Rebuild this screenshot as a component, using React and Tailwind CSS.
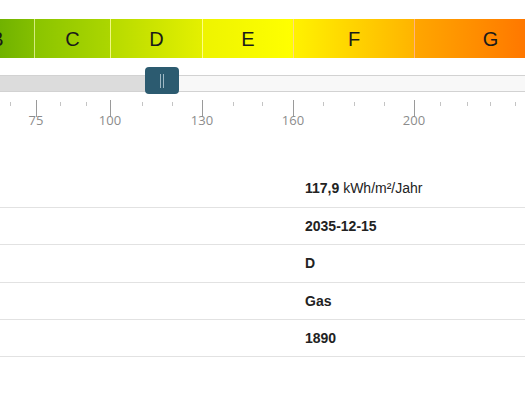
import React from 'react';

const segments = [
  { label: 'B', w: 'w-[74px]', bg: 'bg-gradient-to-r from-[#58a400] to-[#84bf00]' },
  { label: 'C', w: 'w-[76px]', bg: 'bg-gradient-to-r from-[#8ac400] to-[#acd600]' },
  { label: 'D', w: 'w-[92px]', bg: 'bg-gradient-to-r from-[#b6da00] to-[#e4f000]' },
  { label: 'E', w: 'w-[91px]', bg: 'bg-gradient-to-r from-[#eef400] to-[#ffff00]' },
  { label: 'F', w: 'w-[121px]', bg: 'bg-gradient-to-r from-[#fff200] to-[#ffb400]' },
  { label: 'G', w: 'w-[152px]', bg: 'bg-gradient-to-r from-[#ffa600] to-[#ff6400]' },
];

const majorTicks = [
  { x: 36, label: '75' },
  { x: 110, label: '100' },
  { x: 202, label: '130' },
  { x: 293, label: '160' },
  { x: 414, label: '200' },
];

const minorTicks = [10, 60, 86, 142, 172, 233, 262, 323, 354, 384, 440, 467, 490, 515];

const rows = [
  { h: 'h-[38px]', value: '117,9', unit: ' kWh/m²/Jahr' },
  { h: 'h-[37px]', value: '2035-12-15' },
  { h: 'h-[38px]', value: 'D' },
  { h: 'h-[37px]', value: 'Gas' },
  { h: 'h-[37px]', value: '1890' },
];

export default function App() {
  return (
    <div className="w-[525px] h-[394px] overflow-hidden bg-white pt-[19px] font-['Liberation_Sans',Arial,sans-serif]">
      {/* Energieeffizienz-Skala */}
      <div className="flex h-[39px] ml-[-40px] w-[606px]">
        {segments.map((s, i) => (
          <div
            key={s.label}
            className={`${s.w} ${s.bg} flex items-center justify-center text-[20px] text-[#1a1a1a] ${i > 0 ? 'border-l border-white/50' : ''}`}
          >
            {s.label}
          </div>
        ))}
      </div>

      {/* Slider */}
      <div className="relative h-[37px] pt-[17px]">
        <div className="h-[17px] border-y border-[#d2d2d2] bg-[#f8f8f8] flex">
          <div className="w-[150px] bg-[#dcdcdc]" />
        </div>
        <div className="absolute left-[145px] top-[9px] w-[34px] h-[27px] rounded-[4px] bg-[#2c5b70] flex items-center justify-center gap-[2px]">
          <span className="w-px h-[14px] bg-[#9fb8c4]" />
          <span className="w-px h-[14px] bg-[#9fb8c4]" />
        </div>
      </div>

      {/* Ticks */}
      <div className="relative h-[40px] font-['Open_Sans',sans-serif]">
        {minorTicks.map((x) => (
          <div key={x} className="absolute top-[7px] w-px h-[4px] bg-[#c4c4c4]" style={{ left: x }} />
        ))}
        {majorTicks.map((t) => (
          <React.Fragment key={t.label}>
            <div className="absolute top-[5px] w-px h-[17px] bg-[#9a9a9a]" style={{ left: t.x }} />
            <div
              className="absolute top-[17px] w-[40px] text-center text-[13px] leading-[16px] text-[#8c8c8c]"
              style={{ left: t.x - 20 }}
            >
              {t.label}
            </div>
          </React.Fragment>
        ))}
      </div>

      {/* Kennwerte */}
      <div className="mt-[35px]">
        {rows.map((r) => (
          <div key={r.value} className={`${r.h} border-b border-[#e2e2e2] flex items-center`}>
            <div className="w-[305px]" />
            <div className="text-[14px] text-[#222]">
              <span className="font-bold">{r.value}</span>
              {r.unit && <span>{r.unit}</span>}
            </div>
          </div>
        ))}
      </div>
    </div>
  );
}
